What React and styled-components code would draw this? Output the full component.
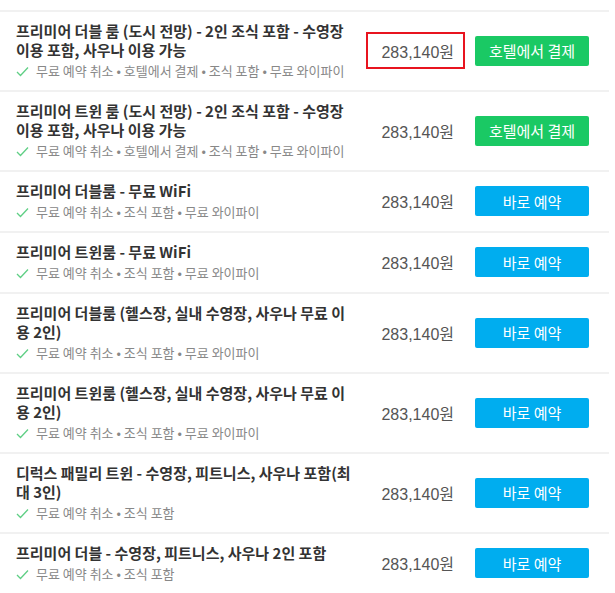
import styled, { createGlobalStyle } from 'styled-components'

const GlobalStyle = createGlobalStyle`
  body {
    margin: 0;
    background: #fff;
    font-family: "Liberation Sans", "Noto Sans CJK KR", sans-serif;
  }
`

const List = styled.div`
  width: 609px;
  padding-top: 10px;
`

const Row = styled.div`
  display: flex;
  align-items: center;
  border-top: 2px solid #f1f1f1;
  padding: 9px 20px 10px 16px;
`

const Info = styled.div`
  flex: 1;
  min-width: 0;
  padding-right: 10px;
`

const Title = styled.div`
  font-family: "Noto Sans CJK KR", sans-serif;
  font-size: 15px;
  font-weight: bold;
  line-height: 19px;
  color: #333;
  word-break: break-all;
`

const Perks = styled.div`
  display: flex;
  align-items: center;
  height: 18px;
  margin-top: 3px;
  font-family: "Noto Sans CJK KR", sans-serif;
  font-size: 13px;
  line-height: 18px;
  color: #888;
  white-space: nowrap;
`

const Check = styled.svg`
  width: 13px;
  height: 13px;
  margin-right: 7px;
  flex-shrink: 0;
`

const Price = styled.div`
  box-sizing: border-box;
  width: 99px;
  height: 37px;
  display: flex;
  align-items: center;
  justify-content: flex-end;
  padding-right: 9px;
  font-size: 16px;
  color: #555;
  flex-shrink: 0;
  border: 2px solid ${p => (p.$marked ? '#e8141f' : 'transparent')};
`

const Button = styled.button`
  width: 114px;
  height: 30px;
  margin-left: 10px;
  border: none;
  border-radius: 2px;
  background: ${p => (p.$hotel ? '#1ac964' : '#00adef')};
  color: #fff;
  font-family: "Noto Sans CJK KR", sans-serif;
  font-size: 15px;
  cursor: pointer;
  flex-shrink: 0;
`

const rooms = [
  {
    title: '프리미어 더블 룸 (도시 전망) - 2인 조식 포함 - 수영장 이용 포함, 사우나 이용 가능',
    perks: '무료 예약 취소 • 호텔에서 결제 • 조식 포함 • 무료 와이파이',
    hotel: true,
    marked: true,
  },
  {
    title: '프리미어 트윈 룸 (도시 전망) - 2인 조식 포함 - 수영장 이용 포함, 사우나 이용 가능',
    perks: '무료 예약 취소 • 호텔에서 결제 • 조식 포함 • 무료 와이파이',
    hotel: true,
  },
  { title: '프리미어 더블룸 - 무료 WiFi', perks: '무료 예약 취소 • 조식 포함 • 무료 와이파이' },
  { title: '프리미어 트윈룸 - 무료 WiFi', perks: '무료 예약 취소 • 조식 포함 • 무료 와이파이' },
  {
    title: '프리미어 더블룸 (헬스장, 실내 수영장, 사우나 무료 이용 2인)',
    perks: '무료 예약 취소 • 조식 포함 • 무료 와이파이',
  },
  {
    title: '프리미어 트윈룸 (헬스장, 실내 수영장, 사우나 무료 이용 2인)',
    perks: '무료 예약 취소 • 조식 포함 • 무료 와이파이',
  },
  { title: '디럭스 패밀리 트윈 - 수영장, 피트니스, 사우나 포함(최대 3인)', perks: '무료 예약 취소 • 조식 포함' },
  { title: '프리미어 더블 - 수영장, 피트니스, 사우나 2인 포함', perks: '무료 예약 취소 • 조식 포함' },
]

const App = () => {
  return (
    <>
      <GlobalStyle />
      <List>
        {rooms.map((room, i) => (
          <Row key={i}>
            <Info>
              <Title>{room.title}</Title>
              <Perks>
                <Check viewBox="0 0 13 13">
                  <path d="M1 7 L4.5 10.5 L12 2.5" fill="none" stroke="#5fcf85" strokeWidth="1.3" />
                </Check>
                {room.perks}
              </Perks>
            </Info>
            <Price $marked={room.marked}>283,140원</Price>
            <Button $hotel={room.hotel}>{room.hotel ? '호텔에서 결제' : '바로 예약'}</Button>
          </Row>
        ))}
      </List>
    </>
  )
}

export default App
